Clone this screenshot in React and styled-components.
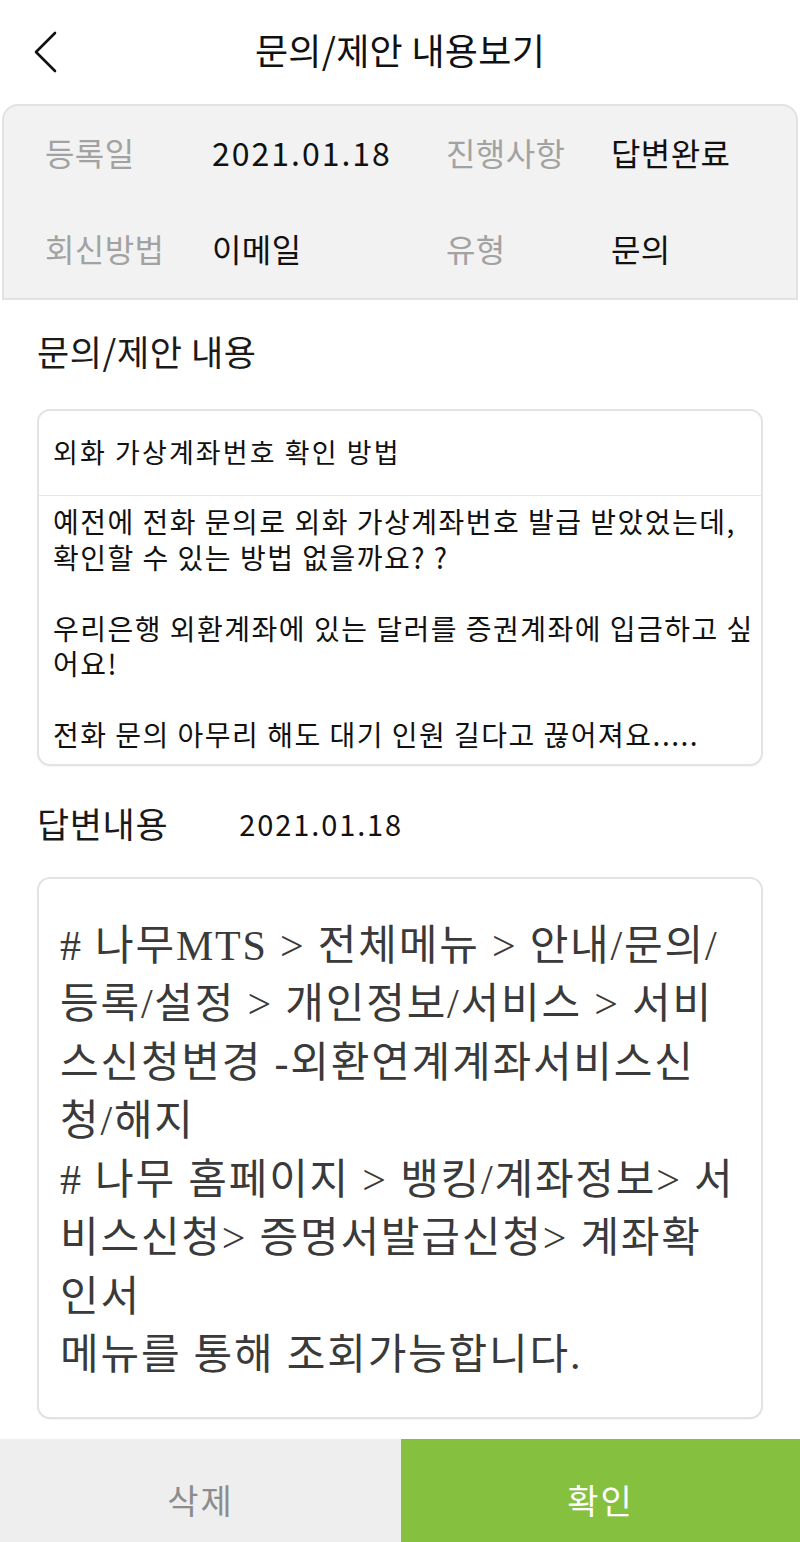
import React from "react";
import styled, { createGlobalStyle } from "styled-components";

const GlobalStyle = createGlobalStyle`
  html, body {
    margin: 0;
    padding: 0;
    background: #ffffff;
  }
  body {
    font-family: "Noto Sans CJK KR", "Noto Sans", sans-serif;
    color: #111111;
  }
`;

const Page = styled.div`
  width: 800px;
  min-height: 100vh;
  display: flex;
  flex-direction: column;
  background: #ffffff;
`;

const Header = styled.header`
  height: 104px;
  display: flex;
  align-items: center;
  justify-content: center;
  position: relative;
`;

const BackButton = styled.button`
  position: absolute;
  left: 26px;
  top: 24px;
  width: 40px;
  height: 56px;
  padding: 0;
  border: 0;
  background: none;
  display: flex;
  align-items: center;
  justify-content: center;
`;

const Title = styled.h1`
  margin: 0 0 6px;
  font-size: 36px;
  font-weight: 400;
  letter-spacing: 0.3px;
  line-height: 1;
  color: #111111;
`;

const InfoPanel = styled.div`
  margin: 0 2px;
  background: #f2f2f2;
  border: 2px solid #e2e2e2;
  border-top-left-radius: 16px;
  border-top-right-radius: 16px;
  display: grid;
  grid-template-columns: 167px 234px 165px 1fr;
  grid-auto-rows: 96px;
  align-items: center;
  padding-left: 41px;
`;

const InfoLabel = styled.span`
  padding-bottom: 4px;
  font-size: 32px;
  letter-spacing: 0.4px;
  color: #a2a2a2;
`;

const InfoValue = styled.span`
  padding-bottom: 4px;
  font-size: 32px;
  color: #111111;
  letter-spacing: ${(p) => (p.$date ? "2px" : "0.4px")};
`;

const Section = styled.section`
  padding: 0 37px;
`;

const SectionHead = styled.div`
  display: flex;
  align-items: center;
  height: 40px;
  margin-top: ${(p) => p.$top}px;
  margin-bottom: ${(p) => p.$bottom}px;
`;

const SectionTitle = styled.h2`
  margin: 0;
  font-size: 35px;
  font-weight: 400;
  letter-spacing: 0.6px;
  color: #1a1a1a;
`;

const HeadDate = styled.span`
  margin-left: 71px;
  font-size: 29px;
  letter-spacing: 1.9px;
  color: #111111;
`;

const Card = styled.div`
  border: 2px solid #e3e3e3;
  border-radius: 13px;
  background: #ffffff;
  box-shadow: 0 1px 1px rgba(0, 0, 0, 0.04);
`;

const QuestionSubject = styled.div`
  height: 80px;
  display: flex;
  align-items: center;
  padding: 0 14px 4px;
  font-size: 27px;
  letter-spacing: 2.1px;
  color: #111111;
  border-bottom: 1px solid #e6e6e6;
`;

const QuestionBody = styled.p`
  margin: 0;
  padding: 8px 0 11px 14px;
  font-size: 28px;
  letter-spacing: 1.5px;
  line-height: 35.5px;
  color: #111111;
  white-space: pre-line;
  word-break: break-all;
`;

const AnswerBody = styled.p`
  margin: 0;
  padding: 38px 12px 32px 21px;
  font-family: "Liberation Serif", "Noto Sans CJK KR", serif;
  font-size: 42px;
  letter-spacing: 1.8px;
  line-height: 58.5px;
  color: #3a3a3a;
  white-space: pre-line;
`;

const ButtonBar = styled.div`
  margin-top: auto;
  display: grid;
  grid-template-columns: 401px 1fr;
  height: 103px;
`;

const BarButton = styled.button`
  border: 0;
  margin: 0;
  padding: 18px 0 0;
  font-family: "Noto Sans CJK KR", sans-serif;
  font-size: 34px;
  letter-spacing: 2px;
  background: ${(p) => (p.$primary ? "#86c03f" : "#eeeeee")};
  color: ${(p) => (p.$primary ? "#ffffff" : "#8c8c8c")};
`;

const question = `예전에 전화 문의로 외화 가상계좌번호 발급 받았었는데, 확인할 수 있는 방법 없을까요? ?

우리은행 외환계좌에 있는 달러를 증권계좌에 입금하고 싶어요!

전화 문의 아무리 해도 대기 인원 길다고 끊어져요.....`;

const answer = `# 나무MTS > 전체메뉴 > 안내/문의/
등록/설정 > 개인정보/서비스 > 서비
스신청변경 -외환연계계좌서비스신
청/해지
# 나무 홈페이지 > 뱅킹/계좌정보> 서
비스신청> 증명서발급신청> 계좌확
인서
메뉴를 통해 조회가능합니다.`;

const ChevronLeft = () => (
  <svg width="24" height="42" viewBox="0 0 24 42" fill="none">
    <polyline
      points="21,2 2,21 21,40"
      stroke="#111"
      strokeWidth="2.6"
      strokeLinecap="round"
      strokeLinejoin="round"
    />
  </svg>
);

export default function App() {
  return (
    <>
      <GlobalStyle />
      <Page>
        <Header>
          <BackButton aria-label="뒤로">
            <ChevronLeft />
          </BackButton>
          <Title>문의/제안 내용보기</Title>
        </Header>

        <InfoPanel>
          <InfoLabel>등록일</InfoLabel>
          <InfoValue $date>2021.01.18</InfoValue>
          <InfoLabel>진행사항</InfoLabel>
          <InfoValue>답변완료</InfoValue>
          <InfoLabel>회신방법</InfoLabel>
          <InfoValue>이메일</InfoValue>
          <InfoLabel>유형</InfoLabel>
          <InfoValue>문의</InfoValue>
        </InfoPanel>

        <Section>
          <SectionHead $top={30} $bottom={39}>
            <SectionTitle>문의/제안 내용</SectionTitle>
          </SectionHead>
          <Card>
            <QuestionSubject>외화 가상계좌번호 확인 방법</QuestionSubject>
            <QuestionBody>{question}</QuestionBody>
          </Card>

          <SectionHead $top={37} $bottom={34}>
            <SectionTitle>답변내용</SectionTitle>
            <HeadDate>2021.01.18</HeadDate>
          </SectionHead>
          <Card>
            <AnswerBody>{answer}</AnswerBody>
          </Card>
        </Section>

        <ButtonBar>
          <BarButton>삭제</BarButton>
          <BarButton $primary>확인</BarButton>
        </ButtonBar>
      </Page>
    </>
  );
}
